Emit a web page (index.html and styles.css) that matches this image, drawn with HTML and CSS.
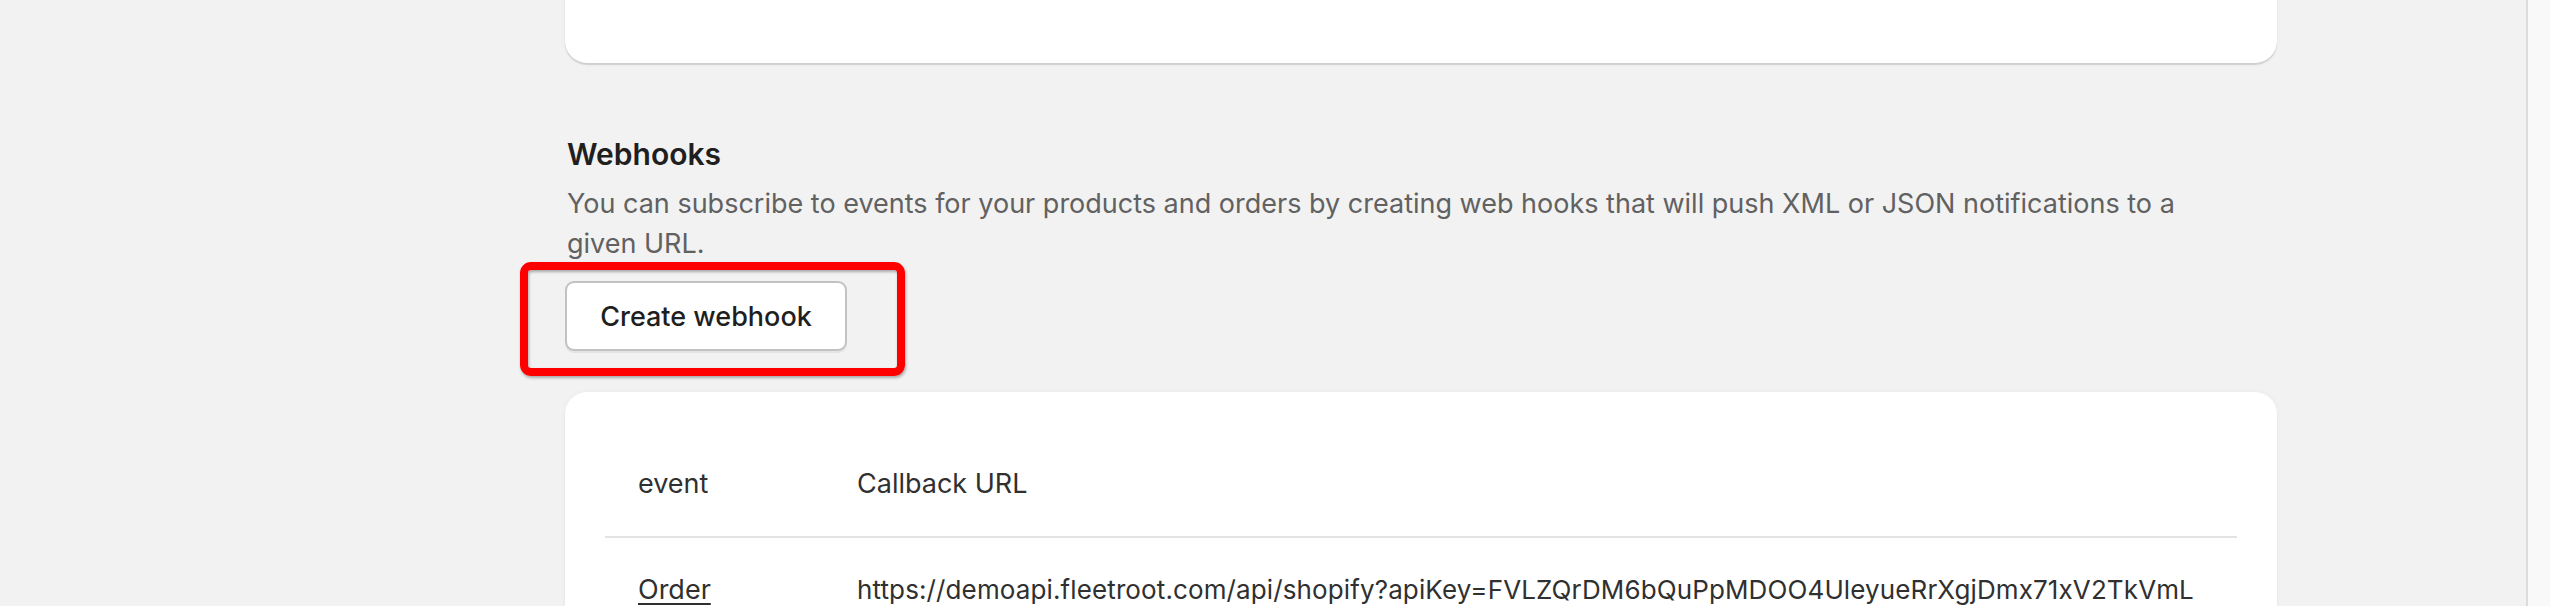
FILE: index.html
```html
<!DOCTYPE html>
<html lang="en">
<head>
<meta charset="utf-8">
<title>Webhooks</title>
<link rel="stylesheet" href="styles.css">
</head>
<body>
<div class="page">
  <main class="main">
    <div class="column">
      <div class="card card-top"></div>

      <section class="webhooks">
        <h2 class="heading">Webhooks</h2>
        <p class="desc">You can subscribe to events for your products and orders by creating web hooks that will push XML or JSON notifications to a given URL.</p>
        <div class="btn-wrap">
          <button class="btn" type="button">Create webhook</button>
          <span class="highlight"></span>
        </div>
      </section>

      <div class="card card-table">
        <div class="table">
          <div class="row row-head">
            <div class="cell cell-event">event</div>
            <div class="cell cell-url">Callback URL</div>
          </div>
          <div class="row">
            <div class="cell cell-event"><a class="link" href="#">Order</a></div>
            <div class="cell cell-url cell-link">https://demoapi.fleetroot.com/api/shopify?apiKey=FVLZQrDM6bQuPpMDOO4UleyueRrXgjDmx71xV2TkVmL</div>
          </div>
        </div>
      </div>
    </div>
  </main>
  <aside class="side"></aside>
</div>
</body>
</html>
```

FILE: styles.css
```css
* { box-sizing: border-box; }

html, body {
  margin: 0;
  padding: 0;
  height: 606px;
  overflow: hidden;
}

body {
  font-family: Inter, "Liberation Sans", Arial, sans-serif;
  color: #303030;
  background: #f2f2f2;
}

.page {
  display: flex;
  height: 606px;
}

.main {
  flex: 1;
  padding-left: 565px;
}

.column {
  width: 1712px;
}

.side {
  width: 24px;
  border-left: 2px solid #dcdcdc;
  background: #f9f9f9;
}

.card {
  background: #ffffff;
  border-radius: 22px;
  box-shadow: 0 2px 1px rgba(0, 0, 0, 0.13), 0 0 6px rgba(0, 0, 0, 0.04);
}

.card-top {
  margin-top: -40px;
  height: 103px;
}

.webhooks {
  padding-top: 71px;
}

.heading {
  margin: 0;
  font-size: 30px;
  line-height: 40px;
  font-weight: 600;
  color: #1f1f1f;
  padding-left: 2px;
}

.desc {
  margin: 10px 0 0;
  font-size: 27px;
  line-height: 40px;
  color: #616161;
  padding-left: 2px;
  max-width: 1640px;
}

.btn-wrap {
  position: relative;
  display: inline-block;
  margin-top: 17px;
}

.btn {
  display: block;
  width: 282px;
  height: 70px;
  font-family: inherit;
  font-size: 27px;
  font-weight: 500;
  color: #1f1f1f;
  background: #ffffff;
  border: 2px solid #c2c2c2;
  border-radius: 9px;
  box-shadow: 0 2px 0 rgba(0, 0, 0, 0.06);
  padding: 0;
}

.highlight {
  position: absolute;
  left: -45px;
  top: -19px;
  right: -58px;
  bottom: -25px;
  border: 8px solid #ff0000;
  border-radius: 11px;
  box-shadow: 1px 2px 3px rgba(0, 0, 0, 0.3), inset 1px 2px 3px rgba(0, 0, 0, 0.3);
  pointer-events: none;
}

.card-table {
  margin-top: 41px;
  padding: 40px 40px 0;
  height: 300px;
}

.table {
  overflow: hidden;
}

.row {
  display: grid;
  grid-template-columns: 220px 1fr;
}

.row-head {
  border-bottom: 2px solid #e3e3e3;
}

.cell {
  padding: 32px 0 32px 33px;
  font-size: 27px;
  line-height: 40px;
  color: #303030;
  white-space: nowrap;
  overflow: hidden;
}

.cell-url {
  padding-left: 32px;
}

.cell-link {
  font-size: 26px;
  letter-spacing: 0.12px;
}

.link {
  color: #303030;
  text-decoration: underline;
  text-underline-offset: 4px;
  text-decoration-thickness: 2px;
}
```
